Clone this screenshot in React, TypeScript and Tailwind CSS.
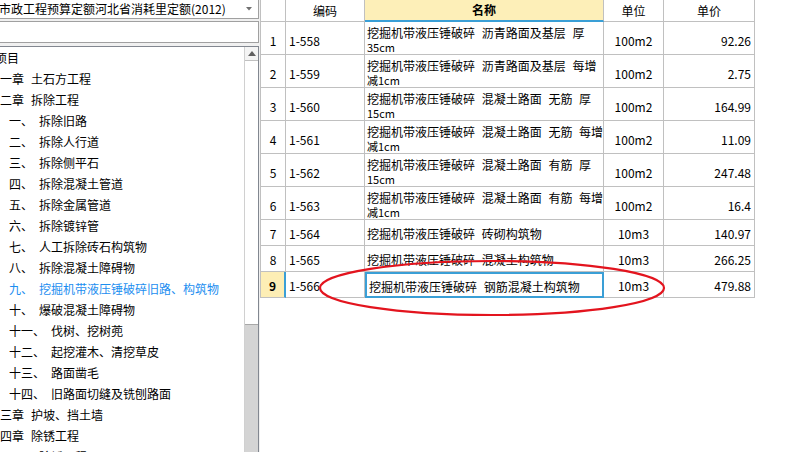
const treeRows = [
  { kind: "root", text: "项目" },
  { kind: "ch", num: "第一章", text: "土石方工程" },
  { kind: "ch", num: "第二章", text: "拆除工程" },
  { kind: "sub", num: "一、", text: "拆除旧路" },
  { kind: "sub", num: "二、", text: "拆除人行道" },
  { kind: "sub", num: "三、", text: "拆除侧平石" },
  { kind: "sub", num: "四、", text: "拆除混凝土管道" },
  { kind: "sub", num: "五、", text: "拆除金属管道" },
  { kind: "sub", num: "六、", text: "拆除镀锌管" },
  { kind: "sub", num: "七、", text: "人工拆除砖石构筑物" },
  { kind: "sub", num: "八、", text: "拆除混凝土障碍物" },
  { kind: "sub", num: "九、", text: "挖掘机带液压锤破碎旧路、构筑物", active: true },
  { kind: "sub", num: "十、", text: "爆破混凝土障碍物" },
  { kind: "sub", num: "十一、", text: "伐树、挖树蔸" },
  { kind: "sub", num: "十二、", text: "起挖灌木、清挖草皮" },
  { kind: "sub", num: "十三、", text: "路面凿毛" },
  { kind: "sub", num: "十四、", text: "旧路面切缝及铣刨路面" },
  { kind: "ch", num: "第三章", text: "护坡、挡土墙" },
  { kind: "ch", num: "第四章", text: "除锈工程" },
  { kind: "sub", num: "一、", text: "除锈工程" },
];

const rows = [
  { no: 1, code: "1-558", name: "挖掘机带液压锤破碎 沥青路面及基层 厚", tail: "35cm", unit: "100m2", price: "92.26" },
  { no: 2, code: "1-559", name: "挖掘机带液压锤破碎 沥青路面及基层 每增", tail: "减1cm", unit: "100m2", price: "2.75" },
  { no: 3, code: "1-560", name: "挖掘机带液压锤破碎 混凝土路面 无筋 厚", tail: "15cm", unit: "100m2", price: "164.99" },
  { no: 4, code: "1-561", name: "挖掘机带液压锤破碎 混凝土路面 无筋 每增", tail: "减1cm", unit: "100m2", price: "11.09" },
  { no: 5, code: "1-562", name: "挖掘机带液压锤破碎 混凝土路面 有筋 厚", tail: "15cm", unit: "100m2", price: "247.48" },
  { no: 6, code: "1-563", name: "挖掘机带液压锤破碎 混凝土路面 有筋 每增", tail: "减1cm", unit: "100m2", price: "16.4" },
  { no: 7, code: "1-564", name: "挖掘机带液压锤破碎 砖砌构筑物", unit: "10m3", price: "140.97" },
  { no: 8, code: "1-565", name: "挖掘机带液压锤破碎 混凝土构筑物", unit: "10m3", price: "266.25" },
  { no: 9, code: "1-566", name: "挖掘机带液压锤破碎 钢筋混凝土构筑物", unit: "10m3", price: "479.88", selected: true },
];

function LeftPanel() {
  return (
    <div className="flex w-[259px] shrink-0 flex-col bg-[#f0f0f0]">
      {/* 定额库下拉 */}
      <div className="flex h-[19px] items-center justify-between overflow-hidden border-r border-b border-[#a0a0a0] bg-white">
        <span className="ml-[-1px] whitespace-nowrap leading-none">市政工程预算定额河北省消耗里定额(2012)</span>
        <span className="flex w-[16px] shrink-0 justify-center pr-[2px]">
          <svg width="6" height="4" viewBox="0 0 6 4">
            <path d="M0 0 H6 L3 3.5 Z" fill="#707070" />
          </svg>
        </span>
      </div>
      {/* 搜索框 */}
      <div className="mt-[2px] h-[22px] border border-l-0 border-[#a0a0a0] bg-white" />
      {/* 章节树 */}
      <div className="mt-[3px] flex min-h-0 flex-1 border-t border-r border-[#828790] bg-white">
        <div className="min-w-0 flex-1 overflow-hidden">
          {treeRows.map((r, i) => (
            <div
              key={i}
              className={
                "flex h-[21px] items-center whitespace-nowrap " +
                (r.active ? "text-[#1c8ef0]" : "text-black") +
                (r.kind === "root" ? " ml-[-5px]" : r.kind === "ch" ? " ml-[-12px]" : " ml-[9px]")
              }
            >
              {r.kind === "root" ? (
                <span>{r.text}</span>
              ) : (
                <>
                  <span>{r.num}</span>
                  <span className={r.kind === "ch" ? "ml-[7px]" : "ml-[6px]"}>{r.text}</span>
                </>
              )}
            </div>
          ))}
        </div>
        {/* 滚动条 */}
        <div className="flex w-[14px] shrink-0 flex-col border-l border-[#d0d0d0]">
          <div className="flex h-[14px] items-center justify-center border-b border-[#c0c0c0] bg-[#f4f4f4]">
            <svg width="8" height="5" viewBox="0 0 8 5">
              <path d="M0 5 L4 0 L8 5 Z" fill="#606060" />
            </svg>
          </div>
          <div className="h-[264px] border-b border-[#a8a8a8] bg-white" />
          <div className="flex-1 bg-[#d4d4d4]" />
        </div>
      </div>
    </div>
  );
}

function QuotaGrid() {
  const line = "border-[#c0c0c0]";
  return (
    <div className={"flex w-[495px] shrink-0 flex-col self-start border-l [word-spacing:4px] " + line}>
      <div className="flex h-[22px]">
        <div className={"w-[25px] border-r border-b " + line} />
        <div className={"flex w-[79px] items-center justify-center border-r border-b " + line}>编码</div>
        <div className={"flex w-[239px] items-center justify-center border-r border-b-2 border-b-[#3a9fd6] bg-[#fdefb8] font-bold " + line}>名称</div>
        <div className={"flex w-[60px] items-center justify-center border-r border-b " + line}>单位</div>
        <div className={"flex w-[91px] items-center justify-center border-r border-b " + line}>单价</div>
      </div>
      {rows.map((r) => {
        const two = !!r.tail;
        const pad = two ? "pt-[6px]" : "pt-[3px]";
        return (
          <div key={r.no} className={"flex " + (two ? "h-[33px]" : "h-[26px]")}>
            <div
              className={
                "flex w-[25px] items-center justify-center border-b " + pad + " " + line +
                (r.selected ? " border-r-2 border-r-[#3a9fd6] bg-[#fdeeb5] font-bold" : " border-r")
              }
            >
              {r.no}
            </div>
            <div className={"flex w-[79px] items-center border-r border-b pl-[3px] " + pad + " " + line}>{r.code}</div>
            {two ? (
              <div className={"flex w-[239px] flex-col overflow-hidden border-r border-b pt-[4px] pl-[2px] leading-[14px] " + line}>
                <span className="whitespace-nowrap">{r.name}</span>
                <span className="text-[11px]">{r.tail}</span>
              </div>
            ) : (
              <div
                className={
                  "flex w-[239px] items-center whitespace-nowrap pl-[2px] " + pad + " " +
                  (r.selected ? "border-2 border-[#3a9fd6]" : "border-r border-b " + line)
                }
              >
                {r.name}
              </div>
            )}
            <div className={"flex w-[60px] items-center justify-center border-r border-b " + pad + " " + line}>{r.unit}</div>
            <div className={"flex w-[91px] items-center justify-end border-r border-b pr-[3px] " + pad + " " + line}>{r.price}</div>
          </div>
        );
      })}
    </div>
  );
}

export default function App() {
  return (
    <div className="relative flex h-[452px] w-[794px] overflow-hidden bg-white font-['Noto_Sans_CJK_SC',sans-serif] text-[12px] text-black">
      <LeftPanel />
      <div className="w-[1px] shrink-0 bg-[#f0f0f0]" />
      <QuotaGrid />
      {/* 红色圈注 */}
      <svg className="pointer-events-none absolute left-0 top-0" width="794" height="452">
        <ellipse cx="492" cy="288" rx="172" ry="27" fill="none" stroke="#e3141e" strokeWidth="2.2" />
      </svg>
    </div>
  );
}
